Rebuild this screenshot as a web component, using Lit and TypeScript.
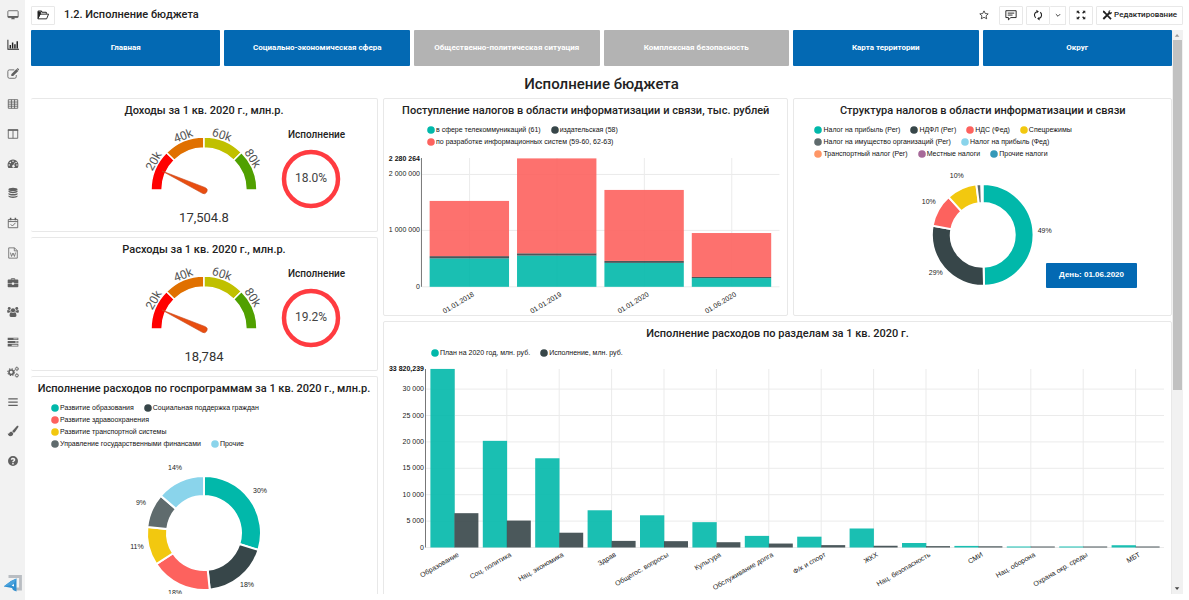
import { LitElement, html, svg, css, SVGTemplateResult } from "lit";
import { customElement, property } from "lit/decorators.js";
import { classMap } from "lit/directives/class-map.js";

const TEAL = "#01b8aa";
const DARK = "#374649";
const RED = "#fd625e";
const YELLOW = "#f2c80f";
const GREY = "#5f6b6d";
const SKY = "#8ad4eb";

type LegendItem = [color: string, label: string];

interface Slice {
  value: number;
  color: string;
}

interface Tag {
  x: number;
  y: number;
  text: string;
}

const ICONS: Record<string, SVGTemplateResult> = {
  monitor: svg`<rect x="1" y="2" width="12" height="8" rx="1" fill="none" stroke="currentColor" stroke-width="1"/><path d="M1 8.3h12V10H1zM5.5 10h3l.6 2H4.9z"/>`,
  chart: svg`<path d="M.5 1v11.5H14v-1.1H1.6V1z"/><path d="M3 7h1.7v4H3zM5.7 4h1.7v7H5.7zM8.4 6h1.7v5H8.4zM11.1 2.500h1.700V11h-1.700z"/>`,
  edit: svg`<path d="M8.500 2.200H2.700C1.700 2.200 1 2.900 1 3.900v6.400C1 11.300 1.700 12 2.700 12h6.400c1 0 1.700-.7 1.700-1.700V8.200" fill="none" stroke="currentColor" stroke-width="1"/><path d="M5 9.300V7.200l6-6 2.200 2.200-6 5.900zM12 .4l.7-.2L14 1.500l-.2.8-.5.500L11.400.9z"/>`,
  table: svg`<path d="M1.500 2h11v10h-11zM1.500 4.700h11M1.500 7.200h11M1.500 9.600h11M5.200 2v10M8.800 2v10" fill="none" stroke="currentColor" stroke-width="1"/>`,
  columns: svg`<path d="M1.500 2h11v10h-11zM7 3v9" fill="none" stroke="currentColor" stroke-width="1"/><path d="M1 1.700h12v1.600H1z"/>`,
  gauge: svg`<path fill-rule="evenodd" d="M7 1.800a6.400 6.400 0 0 0-5.500 9.600c.1.200.3.300.500.300h10c.2 0 .4-.1.500-.3A6.400 6.400 0 0 0 7 1.800zM2.600 7.300a.9.900 0 1 1 0 1.800.9.900 0 0 1 0-1.800zm1.300-3a.9.900 0 1 1 0 1.800.9.900 0 0 1 0-1.800zM7 3a.9.900 0 1 1 0 1.800A.9.900 0 0 1 7 3zm1.500 2.400.7.200-.9 2.900a1.500 1.500 0 1 1-.8-.2zm2.100-1.100a.9.900 0 1 1 0 1.800.9.900 0 0 1 0-1.800zm1 3a.9.900 0 1 1 0 1.800.9.900 0 0 1 0-1.800z"/>`,
  database: svg`<ellipse cx="7" cy="2.800" rx="5.300" ry="1.900"/><path d="M1.700 4.200c1.800 1.700 8.800 1.700 10.600 0v1.400c-.8 2.200-9.800 2.200-10.600 0zM1.700 7c1.800 1.700 8.800 1.700 10.600 0v1.400c-.8 2.200-9.800 2.200-10.600 0zM1.700 9.800c1.800 1.700 8.800 1.700 10.600 0v1.400c-.8 2.200-9.800 2.200-10.600 0z"/>`,
  calendar: svg`<path d="M1.500 3h11v9.500h-11zM1.500 5.300h11M4.300 8.500l2 2 3.600-3.700" fill="none" stroke="currentColor" stroke-width="1"/><path d="M3.300.8h1.800v3H3.300zM8.900.8h1.800v3H8.900z"/>`,
  word: svg`<path d="M2 1h6.800L12 4.200V13H2zM8.500 1v3.500H12M4 6.500l1.300 4.500L7 7l1.700 4L10 6.500" fill="none" stroke="currentColor" stroke-width=".9"/>`,
  briefcase: svg`<path d="M5 3.200V2h4v1.200" fill="none" stroke="currentColor" stroke-width="1.100"/><path d="M1.700 3h10.600c.5 0 .9.400.9.900v3.300H8.300v-.9H5.700v.9H.8V3.900c0-.5.400-.9.900-.9zM.8 8h4.900v.9h2.600V8h4.900v3.100c0 .5-.4.900-.9.900H1.700a.9.900 0 0 1-.9-.9z"/>`,
  users: svg`<circle cx="7" cy="5" r="2.500"/><circle cx="2.600" cy="2.900" r="1.700"/><circle cx="11.400" cy="2.900" r="1.700"/><path d="M3 11.200c0-2.300.7-3.700 1.900-3.800 1.300 1 2.900 1 4.200 0 1.200.1 1.900 1.500 1.900 3.800 0 .9-.6 1.500-1.500 1.500h-5C3.600 12.700 3 12.100 3 11.200zM.2 6.300c0-1 .3-1.700.8-1.800 1 .8 1.900.9 2.900.5-.1 1 .1 1.500.5 2-1 0-1.600.4-2 .9H1.200c-.6 0-1-.5-1-1.600zM13.800 6.300c0-1-.3-1.700-.8-1.800-1 .8-1.900.9-2.900.500.1 1-.1 1.500-.5 2 1 0 1.600.4 2 .9h1.200c.6 0 1-.5 1-1.600z"/>`,
  servers: svg`<path fill-rule="evenodd" d="M.8 2h12.400v2.800H.8zM7.500 2.800v1.100h4.900V2.800zM.8 5.700h12.400v2.800H.8zM9.500 6.500v1.100h2.900V6.500zM.8 9.400h12.400v2.800H.8zM5.500 10.200v1.100h6.900v-1.100z"/>`,
  cogs: svg`<circle cx="4.900" cy="7.200" r="2.600" fill="none" stroke="currentColor" stroke-width="1.800"/><circle cx="4.900" cy="7.200" r="4" fill="none" stroke="currentColor" stroke-width="1.200" stroke-dasharray="1.570 1.570"/><circle cx="11.500" cy="3.300" r="1.500" fill="none" stroke="currentColor" stroke-width="1"/><circle cx="11.500" cy="3.300" r="2.200" fill="none" stroke="currentColor" stroke-width=".7" stroke-dasharray=".9 .8"/><circle cx="11.500" cy="11" r="1.500" fill="none" stroke="currentColor" stroke-width="1"/><circle cx="11.500" cy="11" r="2.200" fill="none" stroke="currentColor" stroke-width=".7" stroke-dasharray=".9 .8"/>`,
  bars: svg`<path d="M1.500 2.500h11V4h-11zM1.500 6.300h11v1.500h-11zM1.500 10.100h11v1.500h-11z"/>`,
  brush: svg`<path d="M12.900 1c.6.400.6 1 .2 1.700L9.300 8.200c-.4.600-.9.900-1.500.9L6.200 7.500c0-.6.300-1.100.8-1.500L11.500 1.200c.5-.4 1-.5 1.400-.2zM5.600 8l1.700 1.700c0 2.300-1.500 3.300-3.400 3.300C2 13 1 11.700.9 9.700c.7.500 1.300.6 1.700-.1C3.200 8.300 4.300 7.600 5.600 8z"/>`,
  help: svg`<path fill-rule="evenodd" d="M7 1.200a5.800 5.800 0 1 1 0 11.600A5.800 5.800 0 0 1 7 1.200zM4.300 4.900l1.400 1c.7-1.200 2.100-1 2.100-.1 0 .9-1.700.9-1.700 2.500v.3h1.700c0-1.100 1.900-1.100 1.900-3.100 0-2.600-4-3.200-5.400-.6zM6.100 9.300V11h1.700V9.300z"/>`,
  folder: svg`<path d="M1.200 10.800V3.200c0-.5.300-.8.800-.8h2.900l1 1.300h4.200c.5 0 .8.300.8.800v1" fill="none" stroke="currentColor" stroke-width="1.200"/><path d="M1 11.500 3.500 6h10l-2.300 5.500z" fill="none" stroke="currentColor" stroke-width="1.100"/><path d="M1 3h3.500v2.500L1.500 11z"/>`,
  star: svg`<path d="M7 2.200l1.500 3.100 3.400.4-2.500 2.300.7 3.400L7 9.700l-3.100 1.700.7-3.400-2.500-2.300 3.400-.4z" fill="none" stroke="currentColor" stroke-width=".9"/>`,
  comment: svg`<path d="M1 2h12v8H6.800L4 12.700V10H1zM3.200 4.800h7.600M3.200 7.100h5.600" fill="none" stroke="currentColor" stroke-width="1.100"/>`,
  refresh: svg`<path d="M5.500 3.100a4.300 4.300 0 0 0-1.200 7.200M8.500 11a4.300 4.300 0 0 0 1.200-7.200" fill="none" stroke="currentColor" stroke-width="1.300"/><path d="M5 .8l3 2-2.500 2.300zM9 13.300l-3-2 2.500-2.300z"/>`,
  caret: svg`<path d="M4.500 6 7 8.500 9.500 6" fill="none" stroke="currentColor" stroke-width="1"/>`,
  expand: svg`<path d="M2 2h3.200L4.200 3l1.500 1.500-1.100 1.100L3.100 4.100 2 5.200zM12 2v3.200l-1.100-1.100-1.500 1.500-1.100-1.100L9.800 3l-1-1zM2 12V8.800l1.100 1.100 1.500-1.500 1.100 1.100L4.200 11l1 1zM12 12H8.800l1-1-1.500-1.500 1.100-1.100 1.500 1.500L12 8.800z"/>`,
  tools: svg`<path d="M1.500.800 3.500 1.300 7 5.200l2-1.800C8.800 1.600 10 .3 11.800.5L10.600 2.300l1 1.300 2.100-.9c.4 2-1.100 3.400-3 3.100L8.900 7.400l4.600 4.400-1.700 1.800L7.300 9l-4.500 4.500-1.900-1.900L5.500 7 1.300 3z"/>`,
};

const icon = (name: string) =>
  html`<svg class="icon" viewBox="0 0 14 14" fill="currentColor" aria-hidden="true">${ICONS[name]}</svg>`;

const point = (cx: number, cy: number, r: number, turn: number) => {
  const a = turn * Math.PI * 2;
  return `${(cx + r * Math.sin(a)).toFixed(2)} ${(cy - r * Math.cos(a)).toFixed(2)}`;
};

const sector = (cx: number, cy: number, r0: number, r1: number, from: number, to: number) => {
  const large = to - from > 0.5 ? 1 : 0;
  return `M${point(cx, cy, r1, from)}A${r1} ${r1} 0 ${large} 1 ${point(cx, cy, r1, to)}L${point(cx, cy, r0, to)}A${r0} ${r0} 0 ${large} 0 ${point(cx, cy, r0, from)}Z`;
};

const chartText = css`
  :host {
    display: block;
  }
  svg {
    display: block;
    width: 100%;
  }
  .label {
    font: 7px "Liberation Sans", Arial, sans-serif;
    fill: #222;
  }
  .strong {
    font-weight: 700;
    fill: #111;
  }
  .end {
    text-anchor: end;
  }
  .mid {
    text-anchor: middle;
  }
  .grid {
    stroke: #ebebeb;
    fill: none;
  }
  .axis {
    stroke: #777;
    fill: none;
  }
`;

@customElement("chart-legend")
export class ChartLegend extends LitElement {
  @property({ attribute: false }) rows: LegendItem[][] = [];

  static styles = css`
    :host {
      display: block;
    }
    .row {
      display: flex;
      gap: 10px;
      margin: 0;
      padding: 0;
      list-style: none;
      font: 7px/12px "Liberation Sans", Arial, sans-serif;
      color: #111;
      white-space: nowrap;
    }
    .item {
      display: flex;
      align-items: center;
      gap: 1px;
    }
    .dot {
      width: 8px;
      height: 8px;
    }
  `;

  render() {
    return this.rows.map(
      (row) => html`<ul class="row">
        ${row.map(
          ([color, label]) => html`<li class="item">
            <svg class="dot" viewBox="0 0 8 8"><circle cx="4" cy="4" r="3.800" fill=${color} /></svg>${label}
          </li>`
        )}
      </ul>`
    );
  }
}

@customElement("donut-chart")
export class DonutChart extends LitElement {
  @property({ attribute: false }) slices: Slice[] = [];
  @property({ attribute: false }) tags: Tag[] = [];
  @property({ type: Number }) width = 100;
  @property({ type: Number }) height = 100;
  @property({ type: Number }) cx = 50;
  @property({ type: Number }) cy = 50;
  @property({ type: Number }) inner = 30;
  @property({ type: Number }) outer = 50;

  static styles = chartText;

  render() {
    let start = 0;
    const paths = this.slices.map((s) => {
      const from = start;
      start += s.value / 100;
      return svg`<path d=${sector(this.cx, this.cy, this.inner, this.outer, from, start)} fill=${s.color} stroke="#fff" stroke-width="2"/>`;
    });
    return html`<svg viewBox="0 0 ${this.width} ${this.height}">
      ${paths}${this.tags.map((t) => svg`<text class="label mid" x=${t.x} y=${t.y}>${t.text}</text>`)}
    </svg>`;
  }
}

@customElement("gauge-panel")
export class GaugePanel extends LitElement {
  @property() value = "";
  @property() percent = "";

  static styles = css`
    :host {
      display: grid;
      grid-template-columns: 1fr 140px 1fr;
      font-family: Roboto, sans-serif;
    }
    .gauge {
      grid-column: 2;
      display: block;
      width: 100%;
    }
    .tick {
      font-size: 12px;
      fill: #555;
      text-anchor: middle;
    }
    .value {
      font-size: 13px;
      fill: #333;
      text-anchor: middle;
    }
    .side {
      padding: 10px 0 0 7px;
    }
    .caption {
      margin: 0 0 8px 7px;
      font-size: 10px;
      line-height: 12px;
      font-weight: 500;
      color: #222;
    }
    .ring {
      display: block;
      width: 60px;
    }
    .percent {
      font-size: 12px;
      fill: #444;
      text-anchor: middle;
    }
  `;

  render() {
    const colors = ["#ff0000", "#e07000", "#c0c000", "#50a000"];
    const ticks = [
      { text: "20k", turn: -60 },
      { text: "40k", turn: -21 },
      { text: "60k", turn: 18 },
      { text: "80k", turn: 57 },
    ];
    return html`
      <svg class="gauge" viewBox="0 0 140 111">
        ${colors.map(
          (c, i) => svg`<path d=${sector(70, 71, 42, 53, -0.25 + i / 8, -0.125 + i / 8)} fill=${c} stroke="#fff" stroke-width="1.500"/>`
        )}
        ${ticks.map((t) => svg`<text class="tick" transform="rotate(${t.turn} 70 71)" x="70" y="17">${t.text}</text>`)}
        <path d="M28 52 71.500 68.700A3.200 3.200 0 0 1 68.400 74.300Z" fill="#e84e10" stroke="#c64820" stroke-width=".6" />
        <text class="value" x="70" y="103">${this.value}</text>
      </svg>
      <div class="side">
        <p class="caption">Исполнение</p>
        <svg class="ring" viewBox="0 0 60 60">
          <circle cx="30" cy="30" r="27" fill="none" stroke="#ff3b40" stroke-width="4.500" />
          <text class="percent" x="30" y="33">${this.percent}</text>
        </svg>
      </div>
    `;
  }
}

@customElement("tax-chart")
export class TaxChart extends LitElement {
  static styles = chartText;

  render() {
    const base = 137;
    const unit = 56.4;
    const bars = [
      { date: "01.01.2018", parts: [0.505, 0.04, 0.98] },
      { date: "01.01.2019", parts: [0.555, 0.04, 1.685] },
      { date: "01.01.2020", parts: [0.425, 0.035, 1.26] },
      { date: "01.06.2020", parts: [0.155, 0.02, 0.78] },
    ];
    const colors = [TEAL, DARK, RED];
    return html`<svg viewBox="0 0 404 164">
      <path class="grid" d="M38 24.500H396M38 80.500H396M38 137H396" />
      ${bars.map((b, i) => {
        const x = 45.7 + i * 87.5;
        let top = base;
        return svg`
          <path class="grid" d="M${x + 40} 8V137"/>
          ${b.parts.map((p, k) => {
            const h = p * unit;
            top -= h;
            return svg`<rect x=${x} y=${top} width="79.500" height=${h} fill=${colors[k]} fill-opacity=".9"/>`;
          })}
          <text class="label end" transform="translate(${x + 45} 146) rotate(-31)">${b.date}</text>`;
      })}
      <path class="axis" d="M37.500 8V137" />
      <text class="label end strong" x="36" y="11">2 280 264</text>
      <text class="label end" x="36" y="26">2 000 000</text>
      <text class="label end" x="36" y="82">1 000 000</text>
      <text class="label end" x="36" y="139">0</text>
    </svg>`;
  }
}

@customElement("sections-chart")
export class SectionsChart extends LitElement {
  static styles = chartText;

  render() {
    const base = 187.5;
    const unit = 0.00528;
    const data: [string, number, number][] = [
      ["Образование", 33820, 6500],
      ["Соц. политика", 20200, 5100],
      ["Нац. экономика", 16900, 2800],
      ["Здрав", 7050, 1250],
      ["Общегос. вопросы", 6100, 1200],
      ["Культура", 4800, 1000],
      ["Обслуживание долга", 2200, 750],
      ["Ф/к и спорт", 2050, 450],
      ["ЖКХ", 3600, 330],
      ["Нац. безопасность", 850, 260],
      ["СМИ", 300, 230],
      ["Нац. оборона", 190, 190],
      ["Охрана окр. среды", 190, 190],
      ["МБТ", 430, 190],
    ];
    const ticks = [0, 5000, 10000, 15000, 20000, 25000, 30000];
    const format = (n: number) => (n ? `${n / 1000} 000` : "0");
    return html`<svg viewBox="0 0 787 260">
      ${ticks.map((t) => {
        const y = base - t * unit;
        return svg`<path class="grid" d="M42 ${y}H780"/><text class="label end" x="40" y=${y + 2}>${format(t)}</text>`;
      })}
      ${data.map(([name, plan, fact], i) => {
        const x = 70.4 + i * 52.4;
        return svg`
          <path class="grid" d="M${x} 9V${base}"/>
          <rect x=${x - 24} y=${base - plan * unit} width="24.300" height=${plan * unit} fill=${TEAL} fill-opacity=".9"/>
          <rect x=${x} y=${base - fact * unit} width="24" height=${fact * unit} fill=${DARK} fill-opacity=".9"/>
          <text class="label end" transform="translate(${x + 5} 196) rotate(-30)">${name}</text>`;
      })}
      <path class="axis" d="M41.500 9V187.500" />
      <text class="label end strong" x="40" y="11">33 820,239</text>
    </svg>`;
  }
}

@customElement("app-root")
export class AppRoot extends LitElement {
  static styles = css`
    :host {
      display: flex;
      height: 100vh;
      background: #fff;
      font-family: Roboto, sans-serif;
      color: #222;
      overflow: hidden;
    }
    .icon {
      display: block;
      width: 12px;
      height: 12px;
      flex: none;
    }
    .sidebar {
      display: flex;
      flex-direction: column;
      justify-content: space-between;
      flex: none;
      width: 25px;
      box-sizing: border-box;
      padding-bottom: 8px;
      background: #f2f2f2;
    }
    .links {
      display: grid;
      grid-auto-rows: 1fr;
      height: 476px;
    }
    .side-link {
      display: flex;
      align-items: center;
      justify-content: center;
      color: #606060;
    }
    .side-link.current {
      color: #222;
    }
    .logo {
      width: 18px;
      height: 18px;
      margin-left: 4px;
    }
    .page {
      display: flex;
      flex-direction: column;
      flex: 1;
      min-width: 0;
      padding: 0 6px 6px;
    }
    .topbar {
      display: flex;
      align-items: center;
      gap: 3px;
      flex: none;
      height: 30px;
    }
    .tool {
      display: flex;
      align-items: center;
      justify-content: center;
      gap: 2px;
      box-sizing: border-box;
      min-width: 24px;
      height: 19px;
      margin: 0;
      padding: 0 5px;
      border: 1px solid #e8e8e8;
      border-radius: 1px;
      background: #fff;
      color: #222;
      font: 500 8px/12px Roboto, sans-serif;
    }
    .tool.bare {
      border-color: transparent;
    }
    .tool.wide .icon {
      width: 10px;
      height: 10px;
    }
    .split {
      display: flex;
    }
    .split .narrow {
      min-width: 16px;
      padding: 0 1px;
      border-left: 0;
    }
    .crumb {
      flex: 1;
      margin: 0 0 0 6px;
      font-size: 11px;
      line-height: 16px;
      font-weight: 500;
    }
    .viewport {
      display: flex;
      flex: 1;
      min-height: 0;
    }
    .content {
      flex: 1;
      min-width: 0;
      overflow: hidden;
    }
    .tabs {
      display: grid;
      grid-template-columns: 190fr repeat(4, 186fr) 190fr;
      gap: 4px;
    }
    .tab {
      height: 36px;
      margin: 0;
      padding: 0 4px;
      border: 0;
      border-radius: 1px;
      background: #0369b3;
      color: #fff;
      font: 700 8px/12px Roboto, sans-serif;
    }
    .tab:disabled {
      background: #b3b3b3;
    }
    .heading {
      margin: 0;
      padding: 8px 0 4px;
      font-size: 15px;
      line-height: 20px;
      font-weight: 500;
      text-align: center;
    }
    .board {
      display: grid;
      grid-template-columns: 347fr 789fr;
      gap: 5px;
    }
    .stack {
      display: flex;
      flex-direction: column;
      gap: 5px;
      min-width: 0;
    }
    .pair {
      display: grid;
      grid-template-columns: 406fr 379fr;
      gap: 5px;
    }
    .panel {
      display: flex;
      flex-direction: column;
      min-width: 0;
      border: 1px solid #e8e8e8;
      border-radius: 2px;
      padding: 4px 0 1px;
    }
    .stack.left .panel {
      border-left: 0;
    }
    .title {
      margin: 0;
      font-size: 11px;
      line-height: 16px;
      font-weight: 500;
      text-align: center;
    }
    .legend {
      margin: 5px 0 0 20px;
    }
    .legend.inset {
      margin-left: 43px;
    }
    .legend.bottom {
      margin: 5px 0 1px 47px;
    }
    .tax {
      margin-top: 2px;
    }
    .donut-area {
      display: grid;
    }
    .donut-area > * {
      grid-area: 1 / 1;
    }
    .day {
      place-self: end;
      height: 25px;
      margin: 0 34px 26px 0;
      padding: 0 13px;
      border: 0;
      border-radius: 1px;
      background: #0369b3;
      color: #fff;
      font: 700 8px/12px "Liberation Sans", Arial, sans-serif;
    }
    .scroll {
      display: flex;
      flex-direction: column;
      flex: none;
      width: 9px;
      padding: 0 1px;
      background: #f1f1f1;
    }
    .arrow {
      display: block;
      width: 9px;
      height: 10px;
    }
    .thumb {
      flex: 0 0 62%;
      background: #c1c1c1;
    }
    .spacer {
      flex: 1;
    }
  `;

  private side = [
    ["monitor", "Рабочий стол"],
    ["chart", "Аналитика"],
    ["edit", "Редактор"],
    ["table", "Таблицы"],
    ["columns", "Колонки"],
    ["gauge", "Показатели"],
    ["database", "Данные"],
    ["calendar", "Календарь"],
    ["word", "Документы"],
    ["briefcase", "Проекты"],
    ["users", "Пользователи"],
    ["servers", "Серверы"],
    ["cogs", "Настройки"],
    ["bars", "Меню"],
    ["brush", "Оформление"],
    ["help", "Справка"],
  ];

  private tabs: [string, boolean][] = [
    ["Главная", false],
    ["Социально-экономическая сфера", false],
    ["Общественно-политическая ситуация", true],
    ["Комплексная безопасность", true],
    ["Карта территории", false],
    ["Округ", false],
  ];

  private programLegend: LegendItem[][] = [
    [[TEAL, "Развитие образования"], [DARK, "Социальная поддержка граждан"]],
    [[RED, "Развитие здравоохранения"]],
    [[YELLOW, "Развитие транспортной системы"]],
    [[GREY, "Управление государственными финансами"], [SKY, "Прочие"]],
  ];

  private programSlices: Slice[] = [
    { value: 29.8, color: TEAL },
    { value: 18.6, color: DARK },
    { value: 17.4, color: RED },
    { value: 10.9, color: YELLOW },
    { value: 9.6, color: GREY },
    { value: 13.7, color: SKY },
  ];

  private programTags: Tag[] = [
    { x: 229, y: 43, text: "30%" },
    { x: 216, y: 137, text: "18%" },
    { x: 144, y: 145, text: "18%" },
    { x: 106, y: 99, text: "11%" },
    { x: 110, y: 55, text: "9%" },
    { x: 144, y: 20, text: "14%" },
  ];

  private taxLegend: LegendItem[][] = [
    [[TEAL, "в сфере телекоммуникаций (61)"], [DARK, "издательская (58)"]],
    [[RED, "по разработке информационных систем (59-60, 62-63)"]],
  ];

  private structureLegend: LegendItem[][] = [
    [[TEAL, "Налог на прибыль (Рег)"], [DARK, "НДФЛ (Рег)"], [RED, "НДС (Фед)"], [YELLOW, "Спецрежимы"]],
    [[GREY, "Налог на имущество организаций (Рег)"], [SKY, "Налог на прибыль (Фед)"]],
    [["#fe9666", "Транспортный налог (Рег)"], ["#a66999", "Местные налоги"], ["#3599b8", "Прочие налоги"]],
  ];

  private structureSlices: Slice[] = [
    { value: 49.6, color: TEAL },
    { value: 28.3, color: DARK },
    { value: 10.4, color: RED },
    { value: 9.7, color: YELLOW },
    { value: 1.5, color: GREY },
  ];

  private structureTags: Tag[] = [
    { x: 251, y: 73, text: "49%" },
    { x: 142, y: 115, text: "29%" },
    { x: 135, y: 44, text: "10%" },
    { x: 163, y: 18, text: "10%" },
  ];

  private planLegend: LegendItem[][] = [[[TEAL, "План на 2020 год, млн. руб."], [DARK, "Исполнение, млн. руб."]]];

  render() {
    return html`
      <nav class="sidebar">
        <div class="links">
          ${this.side.map(
            ([name, label], i) =>
              html`<a class=${classMap({ "side-link": true, current: i === 1 })} href="#${name}" aria-label=${label}>${icon(name)}</a>`
          )}
        </div>
        <svg class="logo" viewBox="0 0 18 18" aria-hidden="true">
          <path d="M4.500 2.500h12v12.500H10" fill="none" stroke="#b9bdc2" stroke-width="2.800" />
          <path d="M-.500 12.500 7 7l5.500-2.500v13l-3.500-1.500-1-2z" fill="#2f8fd0" />
          <path d="M-.500 12.500 7 7l5.500-2.500-3 6z" fill="#4aa2dc" />
          <path d="M7.500 11.500l2.500-1.500v2.500z" fill="#fff" />
        </svg>
      </nav>
      <div class="page">
        <header class="topbar">
          <button class="tool" aria-label="Открыть">${icon("folder")}</button>
          <h1 class="crumb">1.2. Исполнение бюджета</h1>
          <button class="tool bare" aria-label="Избранное">${icon("star")}</button>
          <button class="tool" aria-label="Комментарии">${icon("comment")}</button>
          <div class="split">
            <button class="tool" aria-label="Обновить">${icon("refresh")}</button>
            <button class="tool narrow" aria-label="Интервал">${icon("caret")}</button>
          </div>
          <button class="tool" aria-label="Развернуть">${icon("expand")}</button>
          <button class="tool wide">${icon("tools")}Редактирование</button>
        </header>
        <div class="viewport">
          <main class="content">
            <nav class="tabs">
              ${this.tabs.map(([label, off]) => html`<button class="tab" ?disabled=${off}>${label}</button>`)}
            </nav>
            <h2 class="heading">Исполнение бюджета</h2>
            <div class="board">
              <div class="stack left">
                <section class="panel">
                  <h3 class="title">Доходы за 1 кв. 2020 г., млн.р.</h3>
                  <gauge-panel value="17,504.8" percent="18.0%"></gauge-panel>
                </section>
                <section class="panel">
                  <h3 class="title">Расходы за 1 кв. 2020 г., млн.р.</h3>
                  <gauge-panel value="18,784" percent="19.2%"></gauge-panel>
                </section>
                <section class="panel">
                  <h3 class="title">Исполнение расходов по госпрограммам за 1 кв. 2020 г., млн.р.</h3>
                  <chart-legend class="legend" .rows=${this.programLegend}></chart-legend>
                  <donut-chart
                    width="346" height="170" cx="173" cy="83" inner="37" outer="57"
                    .slices=${this.programSlices} .tags=${this.programTags}
                  ></donut-chart>
                </section>
              </div>
              <div class="stack">
                <div class="pair">
                  <section class="panel">
                    <h3 class="title">Поступление налогов в области информатизации и связи, тыс. рублей</h3>
                    <chart-legend class="legend inset" .rows=${this.taxLegend}></chart-legend>
                    <tax-chart class="tax"></tax-chart>
                  </section>
                  <section class="panel">
                    <h3 class="title">Структура налогов в области информатизации и связи</h3>
                    <chart-legend class="legend" .rows=${this.structureLegend}></chart-legend>
                    <div class="donut-area">
                      <donut-chart
                        width="377" height="154" cx="189" cy="75" inner="32" outer="51"
                        .slices=${this.structureSlices} .tags=${this.structureTags}
                      ></donut-chart>
                      <button class="day">День: 01.06.2020</button>
                    </div>
                  </section>
                </div>
                <section class="panel">
                  <h3 class="title">Исполнение расходов по разделам за 1 кв. 2020 г.</h3>
                  <chart-legend class="legend bottom" .rows=${this.planLegend}></chart-legend>
                  <sections-chart></sections-chart>
                </section>
              </div>
            </div>
          </main>
          <div class="scroll" aria-hidden="true">
            <svg class="arrow" viewBox="0 0 10 10"><path d="M2 7h5L4.500 4z" fill="#999" /></svg>
            <div class="thumb"></div>
            <div class="spacer"></div>
            <svg class="arrow" viewBox="0 0 10 10"><path d="M2 3h5L4.500 6z" fill="#444" /></svg>
          </div>
        </div>
      </div>
    `;
  }
}
